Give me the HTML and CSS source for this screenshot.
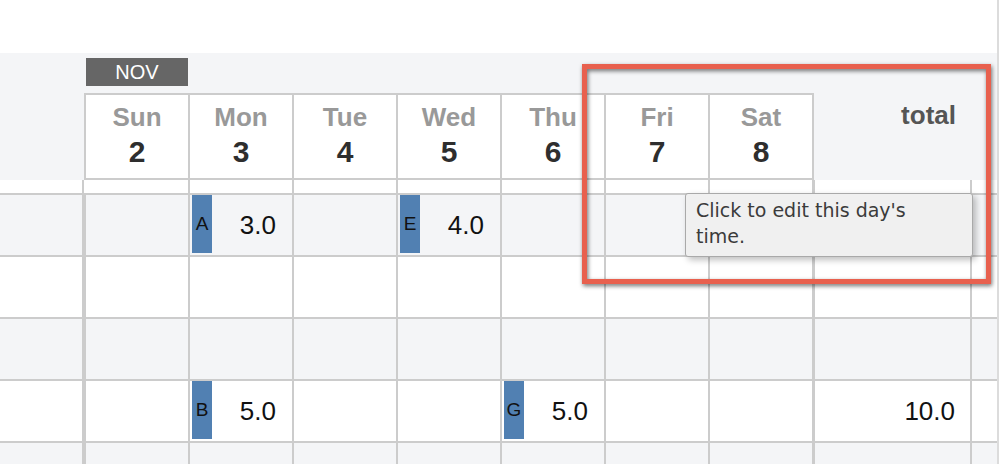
FILE: index.html
```html
<!DOCTYPE html>
<html lang="en">
  <head>
    <meta charset="UTF-8" />
    <meta name="viewport" content="width=device-width, initial-scale=1.0" />
    <title>Timesheet</title>
    <link rel="stylesheet" href="styles.css">
  </head>
  <body>
    <div class="timesheet">
      <div class="timesheet-top"></div>

      <div class="week-head">
        <div class="month-row">
          <div class="month-label">NOV</div>
        </div>
        <div class="days-row">
          <div class="head-blank"></div>
          <div class="day-head"><span class="day-name">Sun</span><span class="day-num">2</span></div>
          <div class="day-head"><span class="day-name">Mon</span><span class="day-num">3</span></div>
          <div class="day-head"><span class="day-name">Tue</span><span class="day-num">4</span></div>
          <div class="day-head"><span class="day-name">Wed</span><span class="day-num">5</span></div>
          <div class="day-head"><span class="day-name">Thu</span><span class="day-num">6</span></div>
          <div class="day-head"><span class="day-name">Fri</span><span class="day-num">7</span></div>
          <div class="day-head"><span class="day-name">Sat</span><span class="day-num">8</span></div>
          <div class="total-head">total</div>
          <div class="head-blank"></div>
        </div>
      </div>

      <div class="grid-row spacer">
        <div class="label"></div>
        <div class="cell first"></div>
        <div class="cell"></div>
        <div class="cell"></div>
        <div class="cell"></div>
        <div class="cell"></div>
        <div class="cell"></div>
        <div class="cell"></div>
        <div class="cell total"></div>
        <div class="cell"></div>
      </div>

      <div class="grid-row line shaded">
        <div class="label"></div>
        <div class="cell"></div>
        <div class="cell entry"><span class="tag">A</span><span class="hours">3.0</span></div>
        <div class="cell"></div>
        <div class="cell entry"><span class="tag">E</span><span class="hours">4.0</span></div>
        <div class="cell"></div>
        <div class="cell"></div>
        <div class="cell"></div>
        <div class="cell total"></div>
        <div class="cell"></div>
      </div>

      <div class="grid-row line">
        <div class="label"></div>
        <div class="cell"></div>
        <div class="cell"></div>
        <div class="cell"></div>
        <div class="cell"></div>
        <div class="cell"></div>
        <div class="cell"></div>
        <div class="cell"></div>
        <div class="cell total"></div>
        <div class="cell"></div>
      </div>

      <div class="grid-row line shaded">
        <div class="label"></div>
        <div class="cell"></div>
        <div class="cell"></div>
        <div class="cell"></div>
        <div class="cell"></div>
        <div class="cell"></div>
        <div class="cell"></div>
        <div class="cell"></div>
        <div class="cell total"></div>
        <div class="cell"></div>
      </div>

      <div class="grid-row line">
        <div class="label"></div>
        <div class="cell"></div>
        <div class="cell entry"><span class="tag">B</span><span class="hours">5.0</span></div>
        <div class="cell"></div>
        <div class="cell"></div>
        <div class="cell entry"><span class="tag">G</span><span class="hours">5.0</span></div>
        <div class="cell"></div>
        <div class="cell"></div>
        <div class="cell total"><span class="hours">10.0</span></div>
        <div class="cell"></div>
      </div>

      <div class="grid-row line shaded">
        <div class="label"></div>
        <div class="cell"></div>
        <div class="cell"></div>
        <div class="cell"></div>
        <div class="cell"></div>
        <div class="cell"></div>
        <div class="cell"></div>
        <div class="cell"></div>
        <div class="cell total"></div>
        <div class="cell"></div>
      </div>

      <!-- overlays -->
      <div class="tooltip">Click to edit this day's time.</div>
      <div class="highlight"></div>
    </div>
  </body>
</html>
```

FILE: styles.css
```css
/* Reset CSS */
* {
  box-sizing: border-box;
}

body {
  margin: 0;
  background-color: #fff;
  font-family: "Liberation Sans", Arial, sans-serif;
}

/* Layout */
.timesheet {
  position: relative;
  width: 999px;
  height: 464px;
  overflow: hidden;
  border-right: 2px solid #dcdcdc;
}

.timesheet-top {
  height: 53px;
}

.month-row,
.days-row,
.grid-row {
  display: grid;
  grid-template-columns: 84px repeat(7, 104px) 158px 1fr;
}

/* Week header */
.week-head {
  padding-top: 5px;
  background-color: #f4f5f7;
}

.month-label {
  grid-column: 2;
  height: 28px;
  margin-left: 2px;
  background-color: #666;
  color: #fff;
  font-size: 20px;
  line-height: 28px;
  text-align: center;
}

.days-row {
  margin-top: 7px;
}

.day-head {
  display: flex;
  flex-direction: column;
  align-items: center;
  height: 87px;
  padding-top: 7px;
  border: 2px solid #ccc;
  border-right: 0;
  background-color: #fff;
  font-weight: bold;
}

.day-name {
  color: #999;
  font-size: 26px;
  line-height: 30px;
}

.day-num {
  margin-top: 3px;
  color: #2e2e2e;
  font-size: 30px;
  line-height: 34px;
}

.total-head {
  padding: 7px 14px 0 0;
  border-left: 2px solid #ccc;
  color: #555;
  font-size: 26px;
  font-weight: bold;
  line-height: 30px;
  text-align: right;
}

/* Rows */
.grid-row .cell {
  border-left: 2px solid #ccc;
}

.grid-row .label {
  border-right: 2px solid #ccc;
}

.grid-row .total {
  border-left-width: 3px;
}

.spacer {
  height: 13px;
}

.spacer .first {
  border-left: 0;
}

.line {
  height: 62px;
  border-top: 2px solid #ccc;
}

.shaded {
  background-color: #f4f5f7;
}

.entry {
  display: flex;
  align-items: center;
  justify-content: space-between;
}

.tag {
  align-self: flex-start;
  width: 20px;
  height: 58px;
  margin-left: 2px;
  background-color: #5180b2;
  color: #111;
  font-size: 19px;
  line-height: 58px;
  text-align: center;
}

.hours {
  padding-right: 16px;
  color: #111;
  font-size: 26px;
}

.total {
  display: flex;
  align-items: center;
  justify-content: flex-end;
}

.total .hours {
  padding-right: 15px;
}

/* Overlays */
.tooltip {
  position: absolute;
  top: 193px;
  left: 685px;
  width: 288px;
  height: 64px;
  padding: 3px 40px 0 10px;
  border: 1px solid #a9a9a9;
  border-radius: 3px;
  background-color: #f0f0f0;
  box-shadow: 3px 3px 6px rgba(0, 0, 0, 0.25);
  color: #3b3b3b;
  font-family: "DejaVu Sans", Verdana, sans-serif;
  font-size: 19px;
  line-height: 26px;
}

.highlight {
  position: absolute;
  top: 64px;
  left: 582px;
  width: 409px;
  height: 220px;
  border: 5px solid #e8604e;
  filter: drop-shadow(1px 2px 2px rgba(0, 0, 0, 0.55));
}
```
